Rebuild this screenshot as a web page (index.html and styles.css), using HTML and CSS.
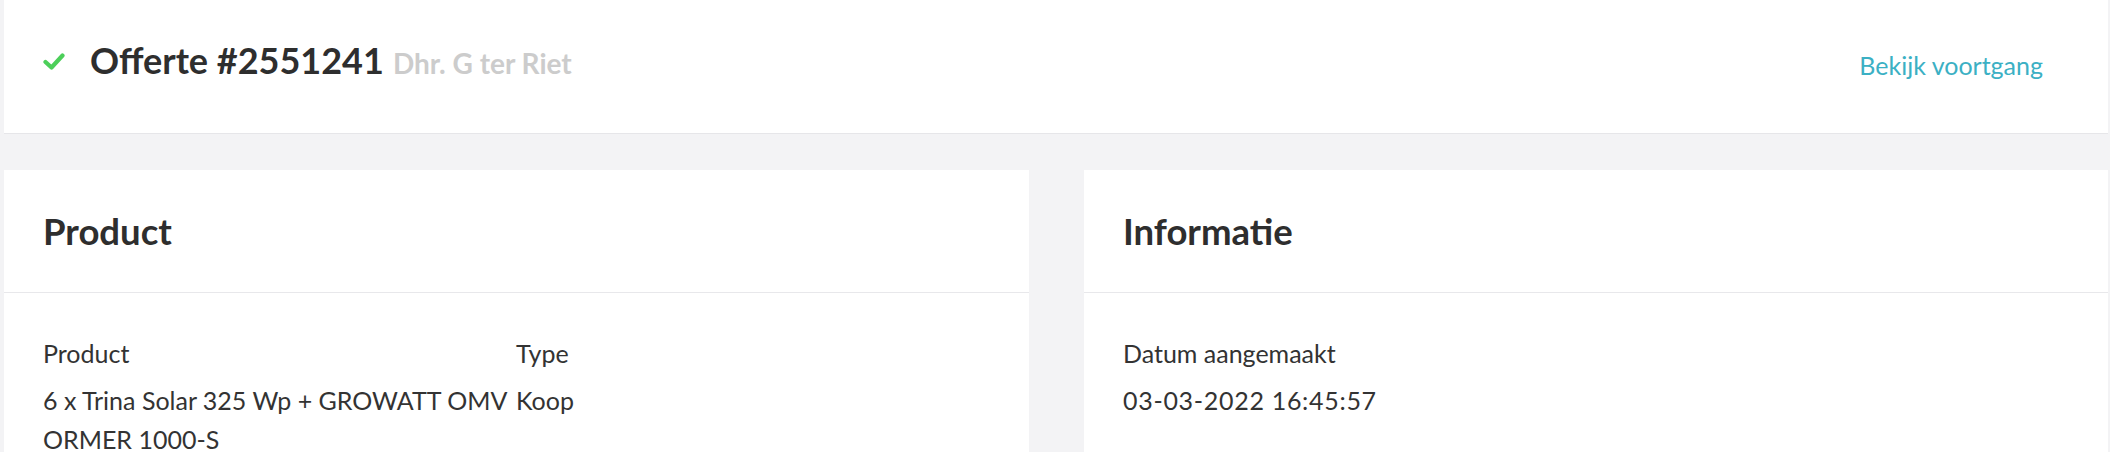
FILE: index.html
```html
<!DOCTYPE html>
<html lang="nl">
<head>
<meta charset="utf-8">
<title>Offerte #2551241</title>
<link rel="stylesheet" href="styles.css">
</head>
<body>
<div class="page">
  <header class="topbar">
    <div class="topbar-title">
      <svg class="check" viewBox="0 0 22 17" width="22" height="17" aria-hidden="true">
        <path d="M2.5 9 L8.5 14.5 L19.5 2.5" fill="none" stroke="#4ccf5a" stroke-width="4.2" stroke-linecap="round" stroke-linejoin="round"/>
      </svg>
      <h1 class="title">Offerte #2551241</h1>
      <span class="customer">Dhr. G ter Riet</span>
    </div>
    <a class="progress-link" href="#">Bekijk voortgang</a>
  </header>

  <div class="cards">
    <section class="card">
      <div class="card-header"><h2>Product</h2></div>
      <div class="card-body">
        <div class="fields fields-product">
          <div class="field">
            <div class="label">Product</div>
            <div class="value">6 x Trina Solar 325 Wp + GROWATT OMV ORMER 1000-S</div>
          </div>
          <div class="field">
            <div class="label">Type</div>
            <div class="value">Koop</div>
          </div>
        </div>
      </div>
    </section>
    <section class="card">
      <div class="card-header"><h2>Informatie</h2></div>
      <div class="card-body">
        <div class="field">
          <div class="label">Datum aangemaakt</div>
          <div class="value value-date">03-03-2022 16:45:57</div>
        </div>
      </div>
    </section>
  </div>
</div>
</body>
</html>
```
FILE: styles.css
```css
* { box-sizing: border-box; }
html, body { margin: 0; padding: 0; }
body {
  background: #f3f3f5;
  font-family: Lato, "Open Sans", sans-serif;
  color: #333333;
  overflow: hidden;
}
.page {
  padding: 0 2px 0 4px;
}
.topbar {
  height: 134px;
  background: #ffffff;
  border-bottom: 1px solid #e6e6e9;
  display: flex;
  align-items: center;
  justify-content: space-between;
  padding: 0 65px 14px 39px;
}
.topbar-title {
  display: flex;
  align-items: baseline;
}
.check {
  align-self: center;
  margin-right: 25px;
  margin-top: 4px;
}
.title {
  margin: 0;
  font-size: 36px;
  font-weight: 700;
  color: #2e2e2e;
}
.customer {
  margin-left: 9px;
  font-size: 28px;
  font-weight: 700;
  color: #cccccc;
}
.progress-link {
  font-size: 25px;
  color: #3bb0c4;
  text-decoration: none;
  margin-top: 10px;
}
.cards {
  margin-top: 36px;
  display: grid;
  grid-template-columns: 1025px 1fr;
  column-gap: 55px;
}
.card {
  background: #ffffff;
  min-height: 400px;
}
.card-header {
  height: 123px;
  border-bottom: 1px solid #e8e8eb;
  display: flex;
  align-items: center;
  padding: 0 39px;
}
.card-header h2 {
  margin: 0;
  font-size: 36.5px;
  font-weight: 700;
  color: #2e2e2e;
}
.card-body {
  padding: 41px 39px;
}
.fields-product {
  display: grid;
  grid-template-columns: 473px 1fr;
}
.label {
  font-size: 25px;
  line-height: 39px;
  margin-bottom: 8px;
}
.value {
  font-size: 25px;
  line-height: 39px;
}
.value-date {
  letter-spacing: 0.7px;
}
```
